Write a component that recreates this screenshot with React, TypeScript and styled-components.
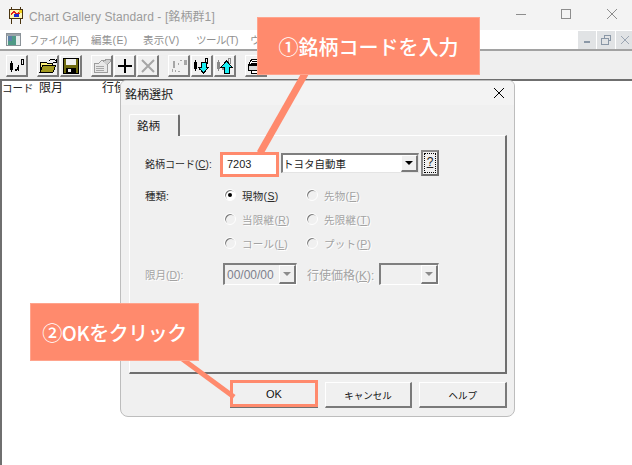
import styled, { createGlobalStyle } from "styled-components";

const ORANGE = "#ff8a6d";

const GlobalStyle = createGlobalStyle`
  html, body {
    margin: 0;
    padding: 0;
    background: #fff;
    overflow: hidden;
  }
  * { box-sizing: border-box; }
`;

const Screen = styled.div`
  position: relative;
  width: 632px;
  height: 465px;
  overflow: hidden;
  display: flex;
  flex-direction: column;
  font-family: "Liberation Sans", "Noto Sans CJK JP", sans-serif;
  font-size: 12px;
  color: #222;
`;

const TitleBar = styled.div`
  height: 30px;
  background: #f3f3f3;
  display: flex;
  align-items: center;
  padding-left: 8px;
  color: #9b9b9b;
  font-size: 12px;
`;
const TitleText = styled.span`
  margin-left: 5px;
  flex: 1;
  letter-spacing: 0.1px;
`;
const WinControls = styled.div`
  display: flex;
  padding-bottom: 2px;
  svg { flex: none; }
`;

const MenuBar = styled.div`
  height: 21px;
  background: #fff;
  border-bottom: 2px solid #a2a2a2;
  display: flex;
  align-items: center;
  padding-left: 6px;
  color: #8f8f8f;
  font-size: 10.5px;
  overflow: hidden;
`;
const MenuItems = styled.div`
  display: flex;
  margin-left: 8px;
  flex: 1;
`;
const MenuItem = styled.span<{ $w: number; $track: number }>`
  width: ${(p) => p.$w}px;
  flex: none;
  letter-spacing: ${(p) => p.$track}px;
  white-space: nowrap;
  overflow: hidden;
`;
const MdiButtons = styled.div`
  display: flex;
  gap: 1px;
  margin-right: -2px;
  height: 18px;
`;
const MdiButton = styled.div`
  width: 18px;
  height: 18px;
  background: #e1e3e5;
  display: flex;
  align-items: center;
  justify-content: center;
`;

const Toolbar = styled.div`
  height: 30px;
  background: #efefef;
  border-bottom: 2px solid #6f6f6f;
  display: flex;
  align-items: flex-start;
  padding: 4px 0 0 6px;
  gap: 9px;
`;
const ToolGroup = styled.div`
  display: flex;
  gap: 1px;
`;
const ToolButton = styled.div`
  width: 22px;
  height: 22px;
  background: #f0f0f0;
  border-style: solid;
  border-width: 1px 2px 2px 1px;
  border-color: #fff #7a7a7a #7a7a7a #fff;
  display: flex;
  align-items: center;
  justify-content: center;
`;

const Sheet = styled.div`
  flex: 1;
  background: #fff;
  border-left: 2px solid #6f6f6f;
  display: flex;
  align-items: flex-start;
  line-height: 14px;
`;
const SheetHead = styled.span<{ $w: number; $size: number }>`
  width: ${(p) => p.$w}px;
  flex: none;
  font-size: ${(p) => p.$size}px;
  white-space: nowrap;
  overflow: hidden;
`;

const Dialog = styled.div`
  position: absolute;
  left: 120px;
  top: 80px;
  width: 395px;
  height: 337px;
  background: #f0f0f0;
  border: 1px solid #bdbdbd;
  border-radius: 6px 6px 8px 8px;
  display: flex;
  flex-direction: column;
  overflow: hidden;
`;
const DialogTitle = styled.div`
  height: 24px;
  flex: none;
  background: #f3f3f3;
  display: flex;
  align-items: center;
  justify-content: space-between;
  padding: 0 10px 0 4px;
`;
const DialogBody = styled.div`
  flex: 1;
  padding: 8px 7px 0 8px;
  display: flex;
  flex-direction: column;
`;
const TabStrip = styled.div`
  height: 22px;
  flex: none;
  display: flex;
  align-items: flex-end;
`;
const Tab = styled.div`
  width: 51px;
  height: 22px;
  margin-bottom: -1px;
  position: relative;
  z-index: 1;
  background: #f0f0f0;
  border-style: solid;
  border-width: 1px 2px 0 1px;
  border-color: #fff #6f6f6f #f0f0f0 #fff;
  border-radius: 2px 2px 0 0;
  padding: 3px 0 0 7px;
  line-height: 16px;
  font-size: 11.5px;
`;
const TabPanel = styled.div`
  height: 239px;
  flex: none;
  border-style: solid;
  border-width: 1px 2px 2px 1px;
  border-color: #fff #6f6f6f #6f6f6f #fff;
  padding: 14px 0 0 15px;
  display: flex;
  flex-direction: column;
  font-size: 10.5px;
`;
const CodeRow = styled.div`
  display: flex;
  align-items: flex-start;
  height: 26px;
`;
const FieldLabel = styled.label<{ $w: number; $off?: boolean; $size?: number; $gap?: number }>`
  width: ${(p) => p.$w}px;
  margin-left: ${(p) => p.$gap ?? 0}px;
  align-self: center;
  flex: none;
  font-size: ${(p) => p.$size ?? 10.5}px;
  white-space: nowrap;
  color: ${(p) => (p.$off ? "#a3a3a3" : "#2a2a2a")};
  text-shadow: ${(p) => (p.$off ? "1px 1px 0 #fff" : "none")};
  u { text-underline-offset: 1px; }
`;
const HighlightBox = styled.div`
  width: 59px;
  height: 25px;
  margin-top: 2px;
  border: 3px solid ${ORANGE};
  background: #fff;
  padding-left: 4px;
  line-height: 18px;
  font-size: 11px;
`;
const SelectBox = styled.div`
  width: 138px;
  height: 20px;
  margin: 3px 0 0 2px;
  background: #fff;
  border-style: solid;
  border-width: 2px 1px 1px 2px;
  border-color: #7f7f7f #e4e4e4 #e4e4e4 #7f7f7f;
  display: flex;
  align-items: center;
  justify-content: space-between;
`;
const ArrowButton = styled.div<{ $off?: boolean }>`
  width: 17px;
  height: 100%;
  flex: none;
  background: #f0f0f0;
  border-style: solid;
  border-width: 1px 2px 2px 1px;
  border-color: #fff #7a7a7a #7a7a7a #fff;
  display: flex;
  align-items: center;
  justify-content: center;
  &::after {
    content: "";
    border-style: solid;
    border-width: 4px 4px 0 4px;
    border-color: ${(p) => (p.$off ? "#8c8c8c" : "#000")} transparent transparent;
  }
`;
const HelpButton = styled.div`
  width: 18px;
  height: 26px;
  margin-left: 2px;
  background: #f0f0f0;
  border: 2px solid #6f6f6f;
  border-color: #8a8a8a #6f6f6f #6f6f6f #8a8a8a;
  display: flex;
  align-items: center;
  justify-content: center;
  &::before {
    content: "?";
    width: 10px;
    height: 18px;
    border: 1px dotted #000;
    text-align: center;
    line-height: 16px;
    text-decoration: underline;
    font-size: 12px;
    color: #222;
  }
`;
const KindGrid = styled.div`
  display: grid;
  grid-template-columns: 79px 82px 1fr;
  grid-auto-rows: 24px;
  align-items: center;
  margin-top: 7px;
`;
const RadioItem = styled.div<{ $off?: boolean }>`
  display: flex;
  align-items: center;
  gap: 6px;
  letter-spacing: 0.3px;
  color: ${(p) => (p.$off ? "#a3a3a3" : "#2a2a2a")};
  text-shadow: ${(p) => (p.$off ? "1px 1px 0 #fff" : "none")};
  u { text-underline-offset: 1px; }
`;
const RadioDot = styled.span<{ $on?: boolean; $off?: boolean }>`
  width: 12px;
  height: 12px;
  flex: none;
  border-radius: 50%;
  background: ${(p) => (p.$off ? "#f0f0f0" : "#fff")};
  border: 1px solid #fff;
  box-shadow: inset 1px 1px 0 #7a7a7a;
  display: flex;
  align-items: center;
  justify-content: center;
  &::after {
    content: "";
    display: ${(p) => (p.$on ? "block" : "none")};
    width: 4px;
    height: 4px;
    border-radius: 50%;
    background: #000;
  }
`;
const ExpiryRow = styled.div`
  display: flex;
  align-items: center;
  height: 22px;
  margin-top: 8px;
`;
const OffCombo = styled.div<{ $w: number }>`
  width: ${(p) => p.$w}px;
  height: 22px;
  flex: none;
  background: #f0f0f0;
  border-style: solid;
  border-width: 2px 1px 1px 2px;
  border-color: #7f7f7f #fff #fff #7f7f7f;
  display: flex;
  align-items: center;
  justify-content: space-between;
  padding-left: 2px;
  color: #7d7f8c;
  font-size: 12px;
`;
const DialogFooter = styled.div`
  display: flex;
  gap: 7px;
  height: 26px;
  margin-top: 8px;
  padding-left: 101px;
  align-items: stretch;
`;
const PushButton = styled.div<{ $mark?: boolean }>`
  width: 88px;
  margin: ${(p) => (p.$mark ? "-2px 0 1px" : "0")};
  background: #f0f0f0;
  border-style: solid;
  border-width: ${(p) => (p.$mark ? "3px" : "1px 2px 2px 1px")};
  border-color: ${(p) => (p.$mark ? ORANGE : "#fff #7a7a7a #7a7a7a #fff")};
  box-shadow: ${(p) => (p.$mark ? "0 1px 0 #6f6f6f" : "none")};
  display: flex;
  align-items: center;
  justify-content: center;
  font-size: ${(p) => (p.$mark ? 11 : 9.5)}px;
  color: #111;
`;

const Callout = styled.div<{ $x: number; $y: number; $w: number; $track?: number }>`
  position: absolute;
  left: ${(p) => p.$x}px;
  top: ${(p) => p.$y}px;
  width: ${(p) => p.$w}px;
  height: 58px;
  background: ${ORANGE};
  border: 1px solid #ffa48d;
  color: #fff;
  font-family: "Noto Sans CJK JP", sans-serif;
  font-size: 20px;
  font-weight: 500;
  letter-spacing: ${(p) => p.$track ?? 0}px;
  display: flex;
  align-items: center;
  justify-content: center;
  white-space: nowrap;
  z-index: 3;
`;
const Leader = styled.svg`
  position: absolute;
  left: 0;
  top: 0;
  z-index: 2;
  pointer-events: none;
`;

const Pix = styled.svg`
  display: block;
  shape-rendering: crispEdges;
`;

const ChartGlyph = ({ dim }: { dim?: boolean }) => {
  const c = dim ? "#8a8a8a" : "#000";
  return (
    <>
      <rect x="1" y="5" width="3" height="7" fill={c} />
      <rect x="2" y="3" width="1" height="11" fill={c} />
      <rect x="6" y="11" width="2" height="2" fill={c} />
      <rect x="9" y="7" width="1" height="6" fill={c} />
      <rect x="8" y="9" width="1" height="3" fill={c} />
      <rect x="12.5" y="1.5" width="2" height="5" fill="none" stroke={c} strokeWidth="1" />
    </>
  );
};

const IconChart = () => (
  <Pix width="16" height="16" viewBox="0 0 16 16">
    <ChartGlyph />
  </Pix>
);
const IconOpen = () => (
  <Pix width="18" height="16" viewBox="0 0 18 16">
    <path d="M1 4h6l1 1h5v2H5L1 14z" fill="#fff27a" stroke="#000" />
    <path d="M1 14l3-7h13l-3 7z" fill="#a39a20" stroke="#000" />
    <path d="M10 3l2-2h3l2 2M17 1v3h-3" fill="none" stroke="#000" />
  </Pix>
);
const IconSave = () => (
  <Pix width="16" height="16" viewBox="0 0 16 16">
    <rect x="0.5" y="0.5" width="15" height="15" fill="#6f6a10" stroke="#000" />
    <rect x="3" y="1" width="10" height="6" fill="#f0f0f0" />
    <rect x="3" y="10" width="10" height="5" fill="#000" />
    <rect x="5" y="11" width="3" height="3" fill="#f0f0f0" />
  </Pix>
);
const IconProps = () => (
  <Pix width="18" height="17" viewBox="0 0 18 17">
    <path d="M1 6h5l3-3h3l2 2v10H1z" fill="#e8e8e8" stroke="#9c9c9c" />
    <path d="M3 9h8M3 11h8M3 13h8" stroke="#a8a8a8" />
    <path d="M10 5l4-3h3v3l-3 3" fill="#cfcfcf" stroke="#9c9c9c" />
  </Pix>
);
const IconPlus = () => (
  <Pix width="16" height="16" viewBox="0 0 16 16">
    <path d="M7 1h2v6h6v2H9v6H7V9H1V7h6z" fill="#000" />
  </Pix>
);
const IconCross = () => (
  <svg width="16" height="16" viewBox="0 0 16 16">
    <path d="M2 2l12 12M14 2L2 14" stroke="#a6a6a6" strokeWidth="2" />
  </svg>
);
const IconScatter = () => (
  <Pix width="18" height="16" viewBox="0 0 18 16">
    <path d="M3 3h2v7H3zM2 11h1v3H2zM5 12h1v2H5zM8 13h2v1H8zM10 2h2v1h-2zM8 5h1v2H8zM14 2h3v5h-3z" fill="#a6a6a6" />
  </Pix>
);
const IconArrowChart = ({ up }: { up?: boolean }) => (
  <Pix width="18" height="18" viewBox="0 0 18 18">
    <ChartGlyph dim={up} />
    <path
      d={up ? "M10.5 4l5.5 6h-3v6H8v-6H5z" : "M8 5h5v5h3l-5.5 6L5 10h3z"}
      fill="#19f0f5"
      stroke="#000"
    />
  </Pix>
);
const IconPrint = () => (
  <Pix width="18" height="16" viewBox="0 0 18 16">
    <path d="M5 1h9l3 5H2z" fill="#fff" stroke="#000" />
    <path d="M1 7h16v5H1z" fill="#d8d8d8" stroke="#000" />
    <path d="M4 12h10v3H4zM5 3h8M4 5h10" fill="#fff" stroke="#000" />
    <rect x="13" y="8" width="3" height="2" fill="#e6d84a" />
  </Pix>
);

const AppIcon = () => (
  <Pix width="16" height="17" viewBox="0 0 16 17">
    <path d="M3 0h1v2h8V0h1v2h2v10h-2v5h-1v-5H4v5H3v-5H1V2h2z" fill="#4a3410" />
    <rect x="2" y="3" width="12" height="8" fill="#fff7b0" />
    <path d="M3 6l3-2 3 2 4-2v2l-4 2-3-2-3 2z" fill="#e3201b" />
    <rect x="6" y="7" width="5" height="3" fill="#1c2fd0" />
    <rect x="11" y="3" width="3" height="3" fill="#f2d21a" />
  </Pix>
);
const MdiIcon = () => (
  <Pix width="15" height="13" viewBox="0 0 15 13">
    <rect x="0.5" y="0.5" width="14" height="12" fill="#e6ecec" stroke="#8a9298" />
    <rect x="1" y="1" width="13" height="2" fill="#9aa4aa" />
    <rect x="2" y="3" width="8" height="9" fill="#4f9a86" />
    <rect x="2" y="3" width="4" height="5" fill="#5c7fa8" />
  </Pix>
);
const CloseX = ({ color = "#000", size = 10 }: { color?: string; size?: number }) => (
  <svg width={size} height={size} viewBox="0 0 10 10">
    <path d="M0 0l10 10M10 0L0 10" stroke={color} strokeWidth="1" />
  </svg>
);

const MENU: [string, number, number][] = [
  ["ファイル(F)", 62, -0.9],
  ["編集(E)", 52, 0.3],
  ["表示(V)", 53, 0.3],
  ["ツール(T)", 54, -0.5],
  ["ウィンドウ(W)", 7, 0],
];

export default function App() {
  return (
    <Screen>
      <GlobalStyle />
      <TitleBar>
        <AppIcon />
        <TitleText>Chart Gallery Standard - [銘柄群1]</TitleText>
        <WinControls>
          <svg width="46" height="12" viewBox="0 0 46 12">
            <path d="M22 6.5h10" stroke="#8d8d8d" />
          </svg>
          <svg width="46" height="12" viewBox="0 0 46 12">
            <rect x="21.5" y="1.5" width="9" height="9" fill="none" stroke="#8d8d8d" />
          </svg>
          <svg width="46" height="12" viewBox="0 0 46 12">
            <path d="M21 1l10 10M31 1L21 11" stroke="#8d8d8d" />
          </svg>
        </WinControls>
      </TitleBar>

      <MenuBar>
        <MdiIcon />
        <MenuItems>
          {MENU.map(([label, w, track]) => (
            <MenuItem key={label} $w={w} $track={track}>
              {label}
            </MenuItem>
          ))}
        </MenuItems>
        <MdiButtons>
          <MdiButton>
            <Pix width="8" height="8" viewBox="0 0 8 8">
              <rect x="1" y="5" width="6" height="2" fill="#8a97a6" />
            </Pix>
          </MdiButton>
          <MdiButton>
            <Pix width="10" height="10" viewBox="0 0 10 10">
              <path d="M3.5 2.5v-2h6v5h-2M0.5 3.5h7v6h-7z" fill="none" stroke="#8a97a6" />
            </Pix>
          </MdiButton>
          <MdiButton>
            <CloseX color="#8a97a6" size={8} />
          </MdiButton>
        </MdiButtons>
      </MenuBar>

      <Toolbar>
        <ToolGroup>
          <ToolButton>
            <IconChart />
          </ToolButton>
        </ToolGroup>
        <ToolGroup>
          <ToolButton>
            <IconOpen />
          </ToolButton>
          <ToolButton>
            <IconSave />
          </ToolButton>
        </ToolGroup>
        <ToolGroup>
          <ToolButton>
            <IconProps />
          </ToolButton>
          <ToolButton>
            <IconPlus />
          </ToolButton>
          <ToolButton>
            <IconCross />
          </ToolButton>
        </ToolGroup>
        <ToolGroup>
          <ToolButton>
            <IconScatter />
          </ToolButton>
          <ToolButton>
            <IconArrowChart />
          </ToolButton>
          <ToolButton>
            <IconArrowChart up />
          </ToolButton>
        </ToolGroup>
        <ToolGroup>
          <ToolButton>
            <IconPrint />
          </ToolButton>
        </ToolGroup>
      </Toolbar>

      <Sheet>
        <SheetHead $w={37} $size={10.5}>
          コード
        </SheetHead>
        <SheetHead $w={63} $size={12}>
          限月
        </SheetHead>
        <SheetHead $w={18} $size={12}>
          行使価格
        </SheetHead>
      </Sheet>

      <Dialog>
        <DialogTitle>
          <span>銘柄選択</span>
          <CloseX size={10} />
        </DialogTitle>
        <DialogBody>
          <TabStrip>
            <Tab>銘柄</Tab>
          </TabStrip>
          <TabPanel>
            <CodeRow>
              <FieldLabel $w={75} $size={10}>
                銘柄コード(<u>C</u>):
              </FieldLabel>
              <HighlightBox>7203</HighlightBox>
              <SelectBox>
                トヨタ自動車
                <ArrowButton />
              </SelectBox>
              <HelpButton />
            </CodeRow>
            <KindGrid>
              <FieldLabel $w={79}>種類:</FieldLabel>
              <RadioItem>
                <RadioDot $on />
                <span>
                  現物(<u>S</u>)
                </span>
              </RadioItem>
              <RadioItem $off>
                <RadioDot $off />
                <span>
                  先物(<u>F</u>)
                </span>
              </RadioItem>
              <span />
              <RadioItem $off>
                <RadioDot $off />
                <span>
                  当限継(<u>R</u>)
                </span>
              </RadioItem>
              <RadioItem $off>
                <RadioDot $off />
                <span>
                  先限継(<u>T</u>)
                </span>
              </RadioItem>
              <span />
              <RadioItem $off>
                <RadioDot $off />
                <span>
                  コール(<u>L</u>)
                </span>
              </RadioItem>
              <RadioItem $off>
                <RadioDot $off />
                <span>
                  プット(<u>P</u>)
                </span>
              </RadioItem>
            </KindGrid>
            <ExpiryRow>
              <FieldLabel $w={78} $off>
                限月(<u>D</u>):
              </FieldLabel>
              <OffCombo $w={74}>
                00/00/00
                <ArrowButton $off />
              </OffCombo>
              <FieldLabel $w={72} $off $size={12} $gap={10}>
                行使価格(<u>K</u>):
              </FieldLabel>
              <OffCombo $w={60}>
                <span />
                <ArrowButton $off />
              </OffCombo>
            </ExpiryRow>
          </TabPanel>
          <DialogFooter>
            <PushButton $mark>OK</PushButton>
            <PushButton>キャンセル</PushButton>
            <PushButton>ヘルプ</PushButton>
          </DialogFooter>
        </DialogBody>
      </Dialog>

      <Leader width="632" height="465" viewBox="0 0 632 465">
        <path d="M306 72L260 153" stroke={ORANGE} strokeWidth="7" fill="none" />
        <path d="M181 358L234 397" stroke={ORANGE} strokeWidth="5" fill="none" />
      </Leader>
      <Callout $x={257} $y={17} $w={223}>
        ①銘柄コードを入力
      </Callout>
      <Callout $x={30} $y={303} $w={169} $track={-0.5}>
        ②OKをクリック
      </Callout>
    </Screen>
  );
}
